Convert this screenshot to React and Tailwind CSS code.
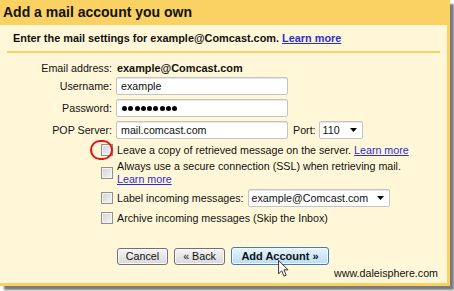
const Arrow = () => (
  <svg width="7" height="4" viewBox="0 0 7 4" className="shrink-0">
    <polygon points="0,0 7,0 3.5,4" fill="#000" />
  </svg>
);

const Checkbox = () => (
  <span className="block w-[12px] h-[12px] shrink-0 border border-[#8e8f8f] bg-linear-to-br from-[#d2d2d2] to-[#f6f6f6] shadow-[inset_0_0_0_1px_#f4f4f4]" />
);

const Field = ({ children, className = "" }) => (
  <div
    className={`h-[18px] flex items-center bg-white border border-[#c4c4c4] rounded-[2px] shadow-[inset_0_1px_0_#e6e6e6] ${className}`}
  >
    {children}
  </div>
);

const Label = ({ children }) => (
  <span className="w-[113px] shrink-0 text-right pr-[1px]">{children}</span>
);

export default function App() {
  return (
    <div className="w-[454px] h-[291px] bg-white font-['Liberation_Sans',Arial,sans-serif] text-[10.7px] leading-[13px] text-[#111]">
      <div className="relative w-[450px] h-[286px] flex flex-col bg-[#fff7d8] border-r-[3px] border-b-[3px] border-[#fad163] shadow-[4px_4px_2px_#7a7a7a]">
        <div className="h-[25px] shrink-0 bg-[#fad163] flex items-center pl-[3px] text-[14px] font-bold">
          Add a mail account you own
        </div>

        <div className="mx-[7px] mt-[7px] pl-[6px] pb-[6px] border-b-2 border-[#fad163] font-bold text-[10.9px]">
          Enter the mail settings for example@Comcast.com.{" "}
          <a href="#" className="text-[#2d2dd6] underline">
            Learn more
          </a>
        </div>

        {/* account fields */}
        <div className="flex flex-col">
          <div className="mt-[6px] h-[18px] flex items-center gap-[3px]">
            <Label>Email address:</Label>
            <span className="font-bold text-[10.9px] pl-[1px]">example@Comcast.com</span>
          </div>
          <div className="h-[18px] flex items-center gap-[3px]">
            <Label>Username:</Label>
            <Field className="w-[172px] pl-[4px]">example</Field>
          </div>
          <div className="mt-[4px] h-[18px] flex items-center gap-[3px]">
            <Label>Password:</Label>
            <Field className="w-[172px] pl-[5px] gap-[1.3px]">
              {[...Array(9)].map((_, i) => (
                <span key={i} className="block w-[5px] h-[5px] rounded-full bg-black" />
              ))}
            </Field>
          </div>
          <div className="mt-[4px] h-[18px] flex items-center gap-[3px]">
            <Label>POP Server:</Label>
            <Field className="w-[172px] pl-[4px]">mail.comcast.com</Field>
            <span className="ml-[2px]">Port:</span>
            <Field className="w-[44px] pl-[3px] pr-[5px] justify-between">
              110 <Arrow />
            </Field>
          </div>
        </div>

        {/* options */}
        <div className="flex flex-col pl-[101px]">
          <div className="mt-[2px] h-[18px] flex items-center gap-[4px]">
            <Checkbox />
            <span>
              Leave a copy of retrieved message on the server.{" "}
              <a href="#" className="text-[#2d2dd6] underline">
                Learn more
              </a>
            </span>
          </div>
          <div className="mt-[1px] flex items-center gap-[4px]">
            <Checkbox />
            <div>
              <div>Always use a secure connection (SSL) when retrieving mail.</div>
              <a href="#" className="text-[#2d2dd6] underline">
                Learn more
              </a>
            </div>
          </div>
          <div className="mt-[3px] h-[18px] flex items-center gap-[4px]">
            <Checkbox />
            <span>Label incoming messages:</span>
            <Field className="w-[142px] pl-[3px] pr-[5px] justify-between">
              example@Comcast.com <Arrow />
            </Field>
          </div>
          <div className="mt-[2px] h-[18px] flex items-center gap-[4px]">
            <Checkbox />
            <span>Archive incoming messages (Skip the Inbox)</span>
          </div>
        </div>

        {/* buttons */}
        <div className="relative mt-[20px] ml-[117px] flex items-center gap-[6px]">
          <button className="w-[51px] h-[17px] rounded-[3px] border border-[#707070] bg-linear-to-b from-[#f4f4f4] to-[#d9d9d9] shadow-[inset_0_0_0_1px_#fbfbfb]">
            Cancel
          </button>
          <button className="w-[51px] h-[17px] rounded-[3px] border border-[#707070] bg-linear-to-b from-[#f4f4f4] to-[#d9d9d9] shadow-[inset_0_0_0_1px_#fbfbfb]">
            « Back
          </button>
          <button className="w-[98px] h-[18px] rounded-[3px] border border-[#3c7fb1] bg-linear-to-b from-[#e8f5fd] to-[#b9dcf4] shadow-[inset_0_0_0_1px_#f2f9fe] font-bold text-[11px]">
            Add Account »
          </button>
          <svg
            width="11"
            height="17"
            viewBox="0 0 12 19"
            className="absolute left-[161px] top-[13px]"
          >
            <path
              d="M0.5 0.5 L0.5 15.5 L4 12 L6.5 18 L9 17 L6.5 11 L11 11 Z"
              fill="#fff"
              stroke="#222"
              strokeWidth="1"
              strokeLinejoin="round"
            />
          </svg>
        </div>

        <div className="mt-[2px] flex justify-end pr-[9px]">www.daleisphere.com</div>

        {/* red annotation circle */}
        <div className="absolute left-[90px] top-[140px] w-[23px] h-[20px] rounded-full border-[2.5px] border-[#e01414]" />
      </div>
    </div>
  );
}
